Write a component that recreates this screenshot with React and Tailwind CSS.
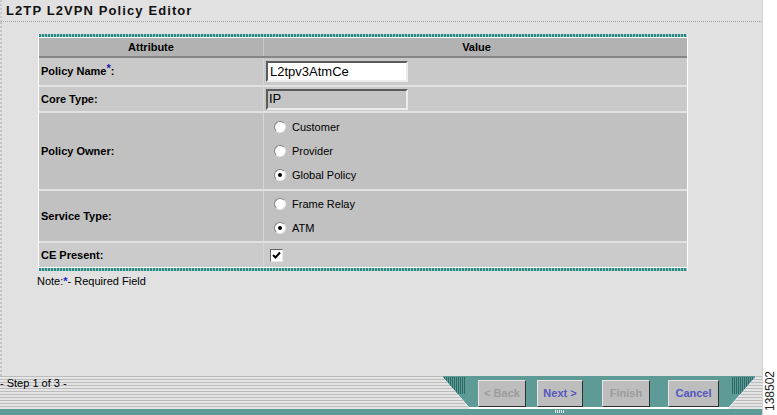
import React from 'react';

const FONT = { fontFamily: '"Liberation Sans", Arial, sans-serif' };

function Radio({ checked }) {
  return (
    <span className="w-[12px] h-[12px] rounded-full bg-white border border-t-[#808080] border-l-[#808080] border-r-[#e8e8e8] border-b-[#e8e8e8] flex items-center justify-center shrink-0">
      {checked && <span className="w-[4px] h-[4px] rounded-full bg-black"></span>}
    </span>
  );
}

function RadioRow({ label, checked }) {
  return (
    <div className="flex items-center gap-[6px] h-[24px] pl-[10px] text-[11px] text-black">
      <Radio checked={checked} />
      <span>{label}</span>
    </div>
  );
}

function Row({ label, bg, h, children, last }) {
  return (
    <div className={`grid grid-cols-[225px_425px] ${bg} ${last ? '' : 'border-b-2 border-[#e2e2e2]'}`} style={{ height: h }}>
      <div className="flex items-center pl-[2px] text-[11px] font-bold text-black border-r border-[#d6d6d6]">{label}</div>
      <div className="flex flex-col justify-center">{children}</div>
    </div>
  );
}

function Btn({ children, w, on }) {
  return (
    <div
      className={`h-[27px] flex items-center justify-center bg-[#bdbdbd] border border-t-[#e6e6e6] border-l-[#e6e6e6] border-r-[#303030] border-b-[#303030] text-[11px] font-bold ${on ? 'text-[#5656c0]' : 'text-[#9c9c9c]'}`}
      style={{ width: w }}
    >
      {children}
    </div>
  );
}

const Stripes = () => (
  <div className="w-[24px] h-[17px] mt-[1px] bg-[repeating-linear-gradient(90deg,#2d6a66_0_1px,#5c9894_1px_2px)]"></div>
);

export default function App() {
  return (
    <div className="w-[777px] h-[415px] flex overflow-hidden bg-[#e1e1e1]" style={FONT}>
      <div className="w-[763px] h-full flex flex-col border-r border-[#d2d2d2]">
        <div className="h-[22px] border-b border-[#a6a6a6] pl-[4px] pt-[3px] text-[13px] font-bold tracking-[1.1px] text-[#111] leading-[16px] border-l-2 border-l-[#c8c8c8] border-dotted">
          L2TP L2VPN Policy Editor
        </div>
        <div className="flex-1 flex flex-col border-l-2 border-dotted border-[#c4c4c4] border-t-0 border-r-0 border-b-0 pt-[12px] pl-[36px]">
          <div className="w-[650px] border-x border-white">
            <div className="h-[3px] bg-[repeating-linear-gradient(90deg,#2c8883_0_2px,#9bcac6_2px_3px)]"></div>
            <div className="h-[1px] bg-white"></div>
            <div className="grid grid-cols-[225px_425px] h-[20px] bg-[#b2b2b2] border-b-2 border-[#858585] text-[11px] font-bold text-black">
              <div className="flex items-center justify-center border-r border-[#c8c8c8]">Attribute</div>
              <div className="flex items-center justify-center">Value</div>
            </div>
            <Row label={<>Policy Name<sup className="text-[#1a1aa8] text-[11px] -top-[4px]">*</sup>:</>} bg="bg-[#c9c9c9]" h={29}>
              <div className="ml-[2px] w-[142px] h-[21px] bg-white border-2 border-t-[#5a5a5a] border-l-[#5a5a5a] border-r-[#ececec] border-b-[#ececec] flex items-center pl-[2px] text-[13px] text-black">L2tpv3AtmCe</div>
            </Row>
            <Row label="Core Type:" bg="bg-[#c9c9c9]" h={26}>
              <div className="ml-[2px] w-[142px] h-[21px] bg-[#c4c4c4] border-2 border-t-[#5a5a5a] border-l-[#5a5a5a] border-r-[#ececec] border-b-[#ececec] flex items-center pl-[1px] text-[13px] text-black">IP</div>
            </Row>
            <Row label="Policy Owner:" bg="bg-[#c1c1c1]" h={78}>
              <RadioRow label="Customer" />
              <RadioRow label="Provider" />
              <RadioRow label="Global Policy" checked />
            </Row>
            <Row label="Service Type:" bg="bg-[#c1c1c1]" h={52}>
              <RadioRow label="Frame Relay" />
              <RadioRow label="ATM" checked />
            </Row>
            <Row label="CE Present:" bg="bg-[#cbcbcb]" h={24} last>
              <div className="ml-[6px] w-[13px] h-[13px] bg-white border border-t-[#606060] border-l-[#606060] border-r-[#e8e8e8] border-b-[#e8e8e8] flex items-center justify-center">
                <svg width="9" height="9" viewBox="0 0 9 9">
                  <path d="M1 4 L3.5 6.5 L8 1.5" fill="none" stroke="#000" strokeWidth="2" />
                </svg>
              </div>
            </Row>
            <div className="h-[1px] bg-white"></div>
            <div className="h-[3px] bg-[repeating-linear-gradient(90deg,#2c8883_0_2px,#9bcac6_2px_3px)]"></div>
          </div>
          <div className="mt-[3px] -ml-[1px] text-[11px] text-black leading-[14px]">
            Note:<span className="text-[#2222cc] font-bold">*</span>- Required Field
          </div>
        </div>
        <div className="h-[39px] flex flex-col">
          <div className="h-[33px] flex bg-[repeating-linear-gradient(180deg,#bcbcbc_0_1px,#e4e4e4_1px_3px)]">
            <div className="pt-[1px] text-[11px] text-black leading-[13px] h-[14px]">- Step 1 of 3 -</div>
            <div className="flex-1"></div>
            <div className="w-[314px] mr-[6px] h-[33px] bg-white [clip-path:polygon(0_0,100%_0,calc(100%-28px)_100%,28px_100%)]">
              <div className="w-[314px] h-[31px] bg-[#5e9a96] flex [clip-path:polygon(0_0,100%_0,calc(100%-27px)_100%,27px_100%)]">
                <Stripes />
                <div className="flex pl-[12px] pt-[4px]">
                  <Btn w={48}>&lt; Back</Btn>
                  <div className="w-[11px]"></div>
                  <Btn w={46} on>Next &gt;</Btn>
                  <div className="w-[19px]"></div>
                  <Btn w={48}>Finish</Btn>
                  <div className="w-[18px]"></div>
                  <Btn w={51} on>Cancel</Btn>
                </div>
                <div className="flex-1"></div>
                <Stripes />
              </div>
            </div>
          </div>
          <div className="h-[6px] bg-[#5e9a96] flex">
            <div className="ml-[555px] w-[10px] h-[3px] mt-[1px] bg-[repeating-linear-gradient(90deg,#e8e8e8_0_1px,transparent_1px_2px)]"></div>
          </div>
        </div>
      </div>
      <div className="flex-1 bg-white flex flex-col justify-end pb-[4px]">
        <div className="[writing-mode:vertical-rl] rotate-180 text-[12px] text-[#222] leading-[13px] self-center">138502</div>
      </div>
    </div>
  );
}
